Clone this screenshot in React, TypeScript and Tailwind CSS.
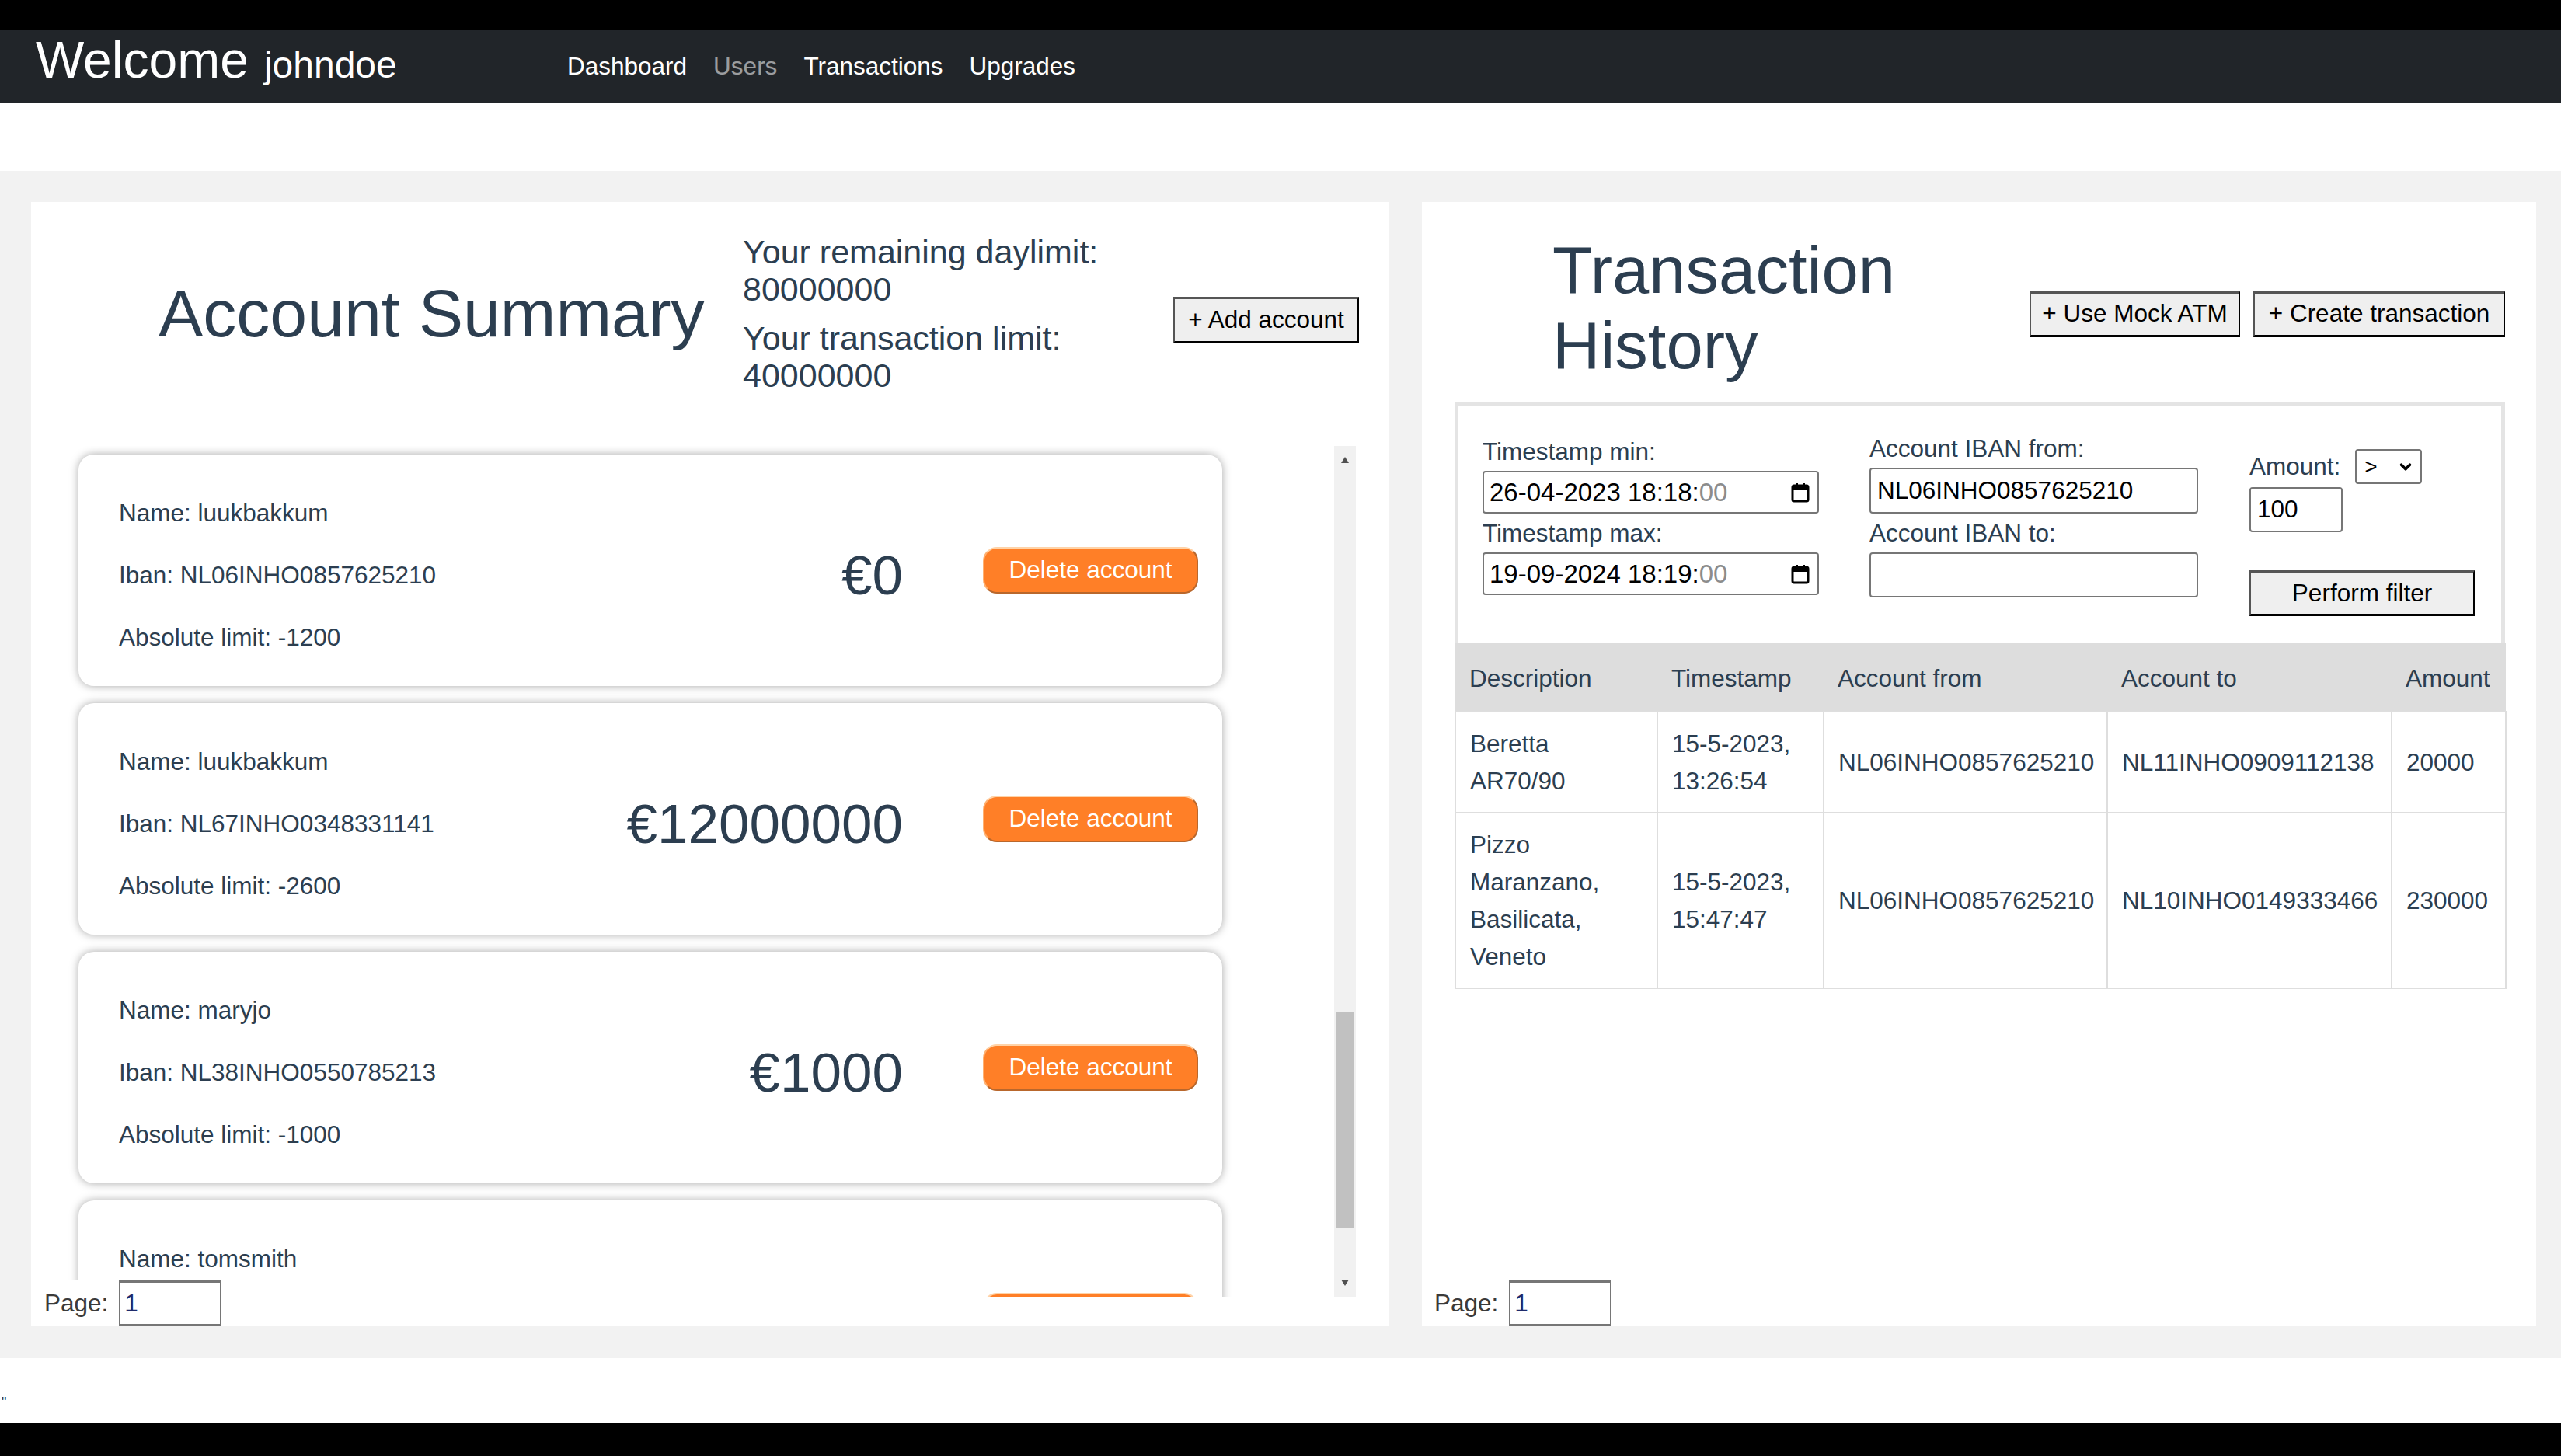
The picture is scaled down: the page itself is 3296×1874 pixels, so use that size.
import { ChevronDown } from 'lucide-react';

type Account = { name: string; iban: string; limit: string; balance: string };

const accounts: Account[] = [
  { name: 'luukbakkum', iban: 'NL06INHO0857625210', limit: '-1200', balance: '€0' },
  { name: 'luukbakkum', iban: 'NL67INHO0348331141', limit: '-2600', balance: '€12000000' },
  { name: 'maryjo', iban: 'NL38INHO0550785213', limit: '-1000', balance: '€1000' },
  { name: 'tomsmith', iban: 'NL21INHO0123456789', limit: '-500', balance: '€250' },
];

type Tx = { desc: string[]; time: string[]; from: string; to: string; amount: string };

const transactions: Tx[] = [
  { desc: ['Beretta', 'AR70/90'], time: ['15-5-2023,', '13:26:54'], from: 'NL06INHO0857625210', to: 'NL11INHO0909112138', amount: '20000' },
  {
    desc: ['Pizzo', 'Maranzano,', 'Basilicata,', 'Veneto'],
    time: ['15-5-2023,', '15:47:47'],
    from: 'NL06INHO0857625210',
    to: 'NL10INHO0149333466',
    amount: '230000',
  },
];

const navLinks = [
  { label: 'Dashboard', muted: false },
  { label: 'Users', muted: true },
  { label: 'Transactions', muted: false },
  { label: 'Upgrades', muted: false },
];

// grijze knop met de "outset" rand zoals de browser hem tekent
const plainButton =
  'flex items-center justify-center border-x-2 border-y-[3px] border-t-[#555] border-l-[#555] border-r-black border-b-black bg-[#efefef] text-[31.5px] leading-none text-black';

const fieldBox = 'flex items-center rounded-[4px] border-2 border-[#767676] bg-white text-black';

function CalendarIcon() {
  return (
    <svg width="24" height="26" viewBox="0 0 24 26" fill="none">
      <rect x="2" y="4" width="20" height="20" rx="2" stroke="black" strokeWidth="3" />
      <rect x="2" y="4" width="20" height="6" fill="black" />
      <rect x="6" y="1" width="3" height="4" fill="black" />
      <rect x="15" y="1" width="3" height="4" fill="black" />
    </svg>
  );
}

function DateField({ value }: { value: string }) {
  return (
    <div className={`${fieldBox} h-[55px] w-[433px] justify-between pl-[7px] pr-[10px] text-[33px]`}>
      <span>
        {value}
        <span className="text-[#8c8c8c]">00</span>
      </span>
      <CalendarIcon />
    </div>
  );
}

function PageInput() {
  return (
    <div className="inline-flex items-center bg-white">
      <span className="text-[31.5px] leading-none text-[#3a3a3a]">Page:</span>
      <div className="ml-[14px] flex h-[59px] w-[131px] items-center border-x-[1.5px] border-y-[3px] border-[#767676] pl-[6px] text-[31.5px] text-[#1f2a6b]">
        1
      </div>
    </div>
  );
}

function AccountCard({ account }: { account: Account }) {
  return (
    <div className="flex h-[298px] w-[1472px] shrink-0 rounded-[20px] bg-white pl-[52px] pr-[31px] shadow-[0_0_12px_rgba(0,0,0,0.35)]">
      <div className="flex flex-col gap-[32px] pt-[51px] text-[31.5px] leading-[48px]">
        <div>Name: {account.name}</div>
        <div>Iban: {account.iban}</div>
        <div>Absolute limit: {account.limit}</div>
      </div>
      <div className="mt-[12px] flex flex-1 items-center justify-end text-[71px] leading-none">{account.balance}</div>
      <button
        type="button"
        className="ml-[103px] h-[60px] w-[277px] self-center rounded-[18px] border-2 border-t-[#ffd3a8] border-l-[#ffb070] border-r-[#b9672c] border-b-[#b9672c] bg-[#ff7f27] text-[31.5px] leading-none text-white"
      >
        Delete account
      </button>
    </div>
  );
}

function FakeScrollbar() {
  return (
    <div className="flex h-full w-[28px] shrink-0 flex-col items-center bg-[#f1f1f1]">
      <div className="mt-[14px] h-0 w-0 border-x-[5px] border-b-[8px] border-x-transparent border-b-[#505050]" />
      <div className="mt-[707px] h-[278px] w-[24px] bg-[#c1c1c1]" />
      <div className="mt-auto mb-[14px] h-0 w-0 border-x-[5px] border-t-[8px] border-x-transparent border-t-[#505050]" />
    </div>
  );
}

function AccountSummary() {
  return (
    <section className="flex h-[1447px] w-[1748px] shrink-0 flex-col bg-white">
      <div className="mt-[40px] flex h-[207px] items-center">
        <div className="w-[916px] pl-[164px]">
          <h1 className="text-[86px] font-medium leading-[1.2]">Account Summary</h1>
        </div>
        <div className="w-[554px] text-[43px] leading-[48px]">
          <h5 className="mb-[15px]">
            Your remaining daylimit:
            <br />
            80000000
          </h5>
          <h5>
            Your transaction limit:
            <br />
            40000000
          </h5>
        </div>
        <button type="button" className={`${plainButton} mt-[16px] h-[60px] w-[239px]`}>
          + Add account
        </button>
      </div>

      <div className="mt-[67px] flex h-[1095px] pl-[20px] pr-[43px]">
        <div className="flex flex-1 flex-col gap-[22px] overflow-hidden pl-[41px] pt-[11px]">
          {accounts.map((account, i) => (
            <AccountCard key={i} account={account} />
          ))}
        </div>
        <FakeScrollbar />
      </div>

      <div className="relative z-10 -mt-[21px] pl-[17px]">
        <PageInput />
      </div>
    </section>
  );
}

function TransactionHistory() {
  const cols = ['w-[260px]', 'w-[214px]', 'w-[365px]', 'w-[366px]', 'w-[147px]'];
  const cell = 'border-2 border-[#dedede] px-[18px] py-[16px] align-middle';

  return (
    <section className="flex h-[1447px] w-[1434px] shrink-0 flex-col bg-white">
      <div className="mt-[39px] flex h-[193px] items-center">
        <div className="w-[782px] pl-[168px]">
          <h1 className="text-[85px] font-medium leading-[97px]">Transaction History</h1>
        </div>
        <div className="mt-[17px] flex gap-[17px]">
          <button type="button" className={`${plainButton} h-[59px] w-[271px]`}>
            + Use Mock ATM
          </button>
          <button type="button" className={`${plainButton} h-[59px] w-[324px]`}>
            + Create transaction
          </button>
        </div>
      </div>

      <div className="ml-[42px] mt-[25px] w-[1352px]">
        <div className="flex border-[5px] border-b-0 border-[#e4e4e4] pb-[34px] pl-[31px] pt-[34px] text-[31.5px] text-[#2c3e50]">
          <div className="flex w-[433px] flex-col">
            <label className="h-[50px] leading-[50px]">Timestamp min:</label>
            <DateField value="26-04-2023 18:18:" />
            <label className="h-[50px] leading-[50px]">Timestamp max:</label>
            <DateField value="19-09-2024 18:19:" />
          </div>
          <div className="-mt-[4px] ml-[65px] flex w-[423px] flex-col">
            <label className="h-[50px] leading-[50px]">Account IBAN from:</label>
            <div className={`${fieldBox} h-[59px] pl-[8px] text-[31.5px]`}>NL06INHO0857625210</div>
            <label className="h-[50px] leading-[50px]">Account IBAN to:</label>
            <div className={`${fieldBox} h-[58px]`} />
          </div>
          <div className="ml-[66px] flex flex-col">
            <div className="mt-[22px] flex h-[45px] items-center">
              <span>Amount:</span>
              <div className={`${fieldBox} ml-[19px] h-[45px] w-[86px] justify-between pl-[10px] pr-[8px] text-[28px]`}>
                <span>&gt;</span>
                <ChevronDown size={22} strokeWidth={4} />
              </div>
            </div>
            <div className={`${fieldBox} mt-[4px] h-[58px] w-[120px] pl-[8px] text-[31.5px]`}>100</div>
            <button type="button" className={`${plainButton} mt-[49px] h-[59px] w-[290px]`}>
              Perform filter
            </button>
          </div>
        </div>

        <table className="w-[1352px] table-fixed border-collapse text-left text-[31.5px] leading-[48px] text-[#2c3e50]">
          <thead>
            <tr className="h-[89px] bg-[#dddddd]">
              {['Description', 'Timestamp', 'Account from', 'Account to', 'Amount'].map((h, i) => (
                <th key={h} className={`${cols[i]} px-[18px] pt-[3px] font-normal`}>
                  {h}
                </th>
              ))}
            </tr>
          </thead>
          <tbody>
            {transactions.map((tx, i) => (
              <tr key={i}>
                <td className={cell}>
                  {tx.desc.map((line) => (
                    <div key={line}>{line}</div>
                  ))}
                </td>
                <td className={cell}>
                  {tx.time.map((line) => (
                    <div key={line}>{line}</div>
                  ))}
                </td>
                <td className={cell}>{tx.from}</td>
                <td className={cell}>{tx.to}</td>
                <td className={cell}>{tx.amount}</td>
              </tr>
            ))}
          </tbody>
        </table>
      </div>

      <div className="mt-auto pl-[16px]">
        <PageInput />
      </div>
    </section>
  );
}

export default function App() {
  return (
    <div className="flex h-[1874px] w-[3296px] flex-col overflow-hidden bg-white font-['Liberation_Sans',Arial,sans-serif] text-[#2c3e50]">
      <div className="h-[39px] shrink-0 bg-black" />

      <nav className="flex h-[93px] shrink-0 items-start bg-[#212529] pl-[46px] text-white">
        <div className="mt-[5px] flex w-[667px] items-baseline">
          <span className="text-[66px] leading-none">Welcome</span>
          <span className="ml-[20px] text-[48px] leading-none">johndoe</span>
        </div>
        <ul className="mt-[31px] flex text-[31.5px] leading-none">
          {navLinks.map((link) => (
            <li key={link.label} className={`px-[17px] ${link.muted ? 'text-white/55' : 'text-white'}`}>
              {link.label}
            </li>
          ))}
        </ul>
      </nav>

      <div className="h-[88px] shrink-0" />

      <main className="flex h-[1528px] shrink-0 gap-[42px] bg-[#f2f2f2] pl-[40px] pt-[40px]">
        <AccountSummary />
        <TransactionHistory />
      </main>

      <div className="h-[84px] shrink-0 pl-[2px] pt-[48px] text-[18px] leading-none text-[#333]">"</div>
      <div className="flex-1 bg-black" />
    </div>
  );
}
